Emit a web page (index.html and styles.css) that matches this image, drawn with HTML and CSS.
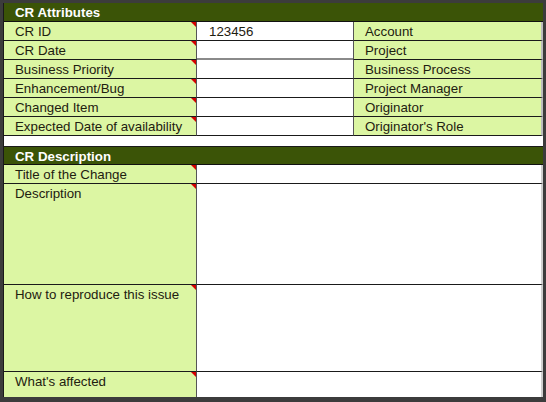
FILE: index.html
```html
<!DOCTYPE html>
<html>
<head>
<meta charset="utf-8">
<link rel="stylesheet" href="styles.css">
</head>
<body>
<div class="sheet">
  <section class="block">
    <div class="head">CR Attributes</div>
    <div class="grid3">
      <div class="lbl mark">CR ID</div><div class="val">123456</div><div class="lbl2">Account</div>
      <div class="lbl mark">CR Date</div><div class="val gray"></div><div class="lbl2">Project</div>
      <div class="lbl mark">Business Priority</div><div class="val"></div><div class="lbl2">Business Process</div>
      <div class="lbl mark">Enhancement/Bug</div><div class="val"></div><div class="lbl2">Project Manager</div>
      <div class="lbl mark">Changed Item</div><div class="val"></div><div class="lbl2">Originator</div>
      <div class="lbl mark">Expected Date of availability</div><div class="val"></div><div class="lbl2">Originator's Role</div>
    </div>
  </section>
  <div class="spacer"></div>
  <section class="block">
    <div class="head">CR Description</div>
    <div class="grid2">
      <div class="lbl mark">Title of the Change</div><div class="val"></div>
      <div class="lbl mark">Description</div><div class="val"></div>
      <div class="lbl mark">How to reproduce this issue</div><div class="val"></div>
      <div class="lbl mark last">What's affected</div><div class="val last"></div>
    </div>
  </section>
</div>
</body>
</html>
```

FILE: styles.css
```css
html, body {
  margin: 0;
  padding: 0;
}
body {
  width: 546px;
  height: 402px;
  background: #3c3c3c;
  box-sizing: border-box;
  padding: 3px 3px 5px 3px;
  font-family: "Liberation Sans", Arial, sans-serif;
  font-size: 13.3px;
  color: #1e2010;
}
.sheet {
  background: #ffffff;
  height: 100%;
  display: flex;
  flex-direction: column;
}
.block {
  border-left: 1px solid #1a1a1a;
}
.head {
  background: #3b5407;
  color: #ffffff;
  font-weight: bold;
  height: 18px;
  line-height: 19px;
  padding-left: 11px;
  border-bottom: 1px solid #111;
}
.grid3 {
  display: grid;
  grid-template-columns: 193px 156px 1fr;
  grid-auto-rows: 19px;
}
.grid2 {
  display: grid;
  grid-template-columns: 193px 1fr;
  grid-template-rows: 19px 101px 87px 1fr;
  flex: 1;
}
.block:last-child {
  flex: 1;
  display: flex;
  flex-direction: column;
  border-top: 1px solid #1a1a1a;
}
.block:last-child .head {
  height: 17px;
}
.lbl, .lbl2, .val {
  box-sizing: border-box;
  border-bottom: 1px solid #1a1a1a;
  padding-left: 11px;
  line-height: 19px;
  position: relative;
}
.lbl {
  background: #dcf6a3;
  border-right: 1px solid #555;
}
.lbl2 {
  background: #dcf6a3;
  border-left: 1px solid #555;
  border-right: 2px solid #bdbdbd;
  padding-left: 11px;
}
.val {
  background: #ffffff;
  padding-left: 12px;
}
.val.gray {
  border-bottom: 2px solid #8a8a8a;
}
.last {
  border-bottom: 0;
}
.grid2 .val {
  border-right: 2px solid #cfcfcf;
}
.mark::after {
  content: "";
  position: absolute;
  top: 0;
  right: 0;
  width: 0;
  height: 0;
  border-top: 5px solid #d40000;
  border-left: 5px solid transparent;
}
.spacer {
  height: 10px;
  border-left: 1px solid #1a1a1a;
  background: #ffffff;
}
```
